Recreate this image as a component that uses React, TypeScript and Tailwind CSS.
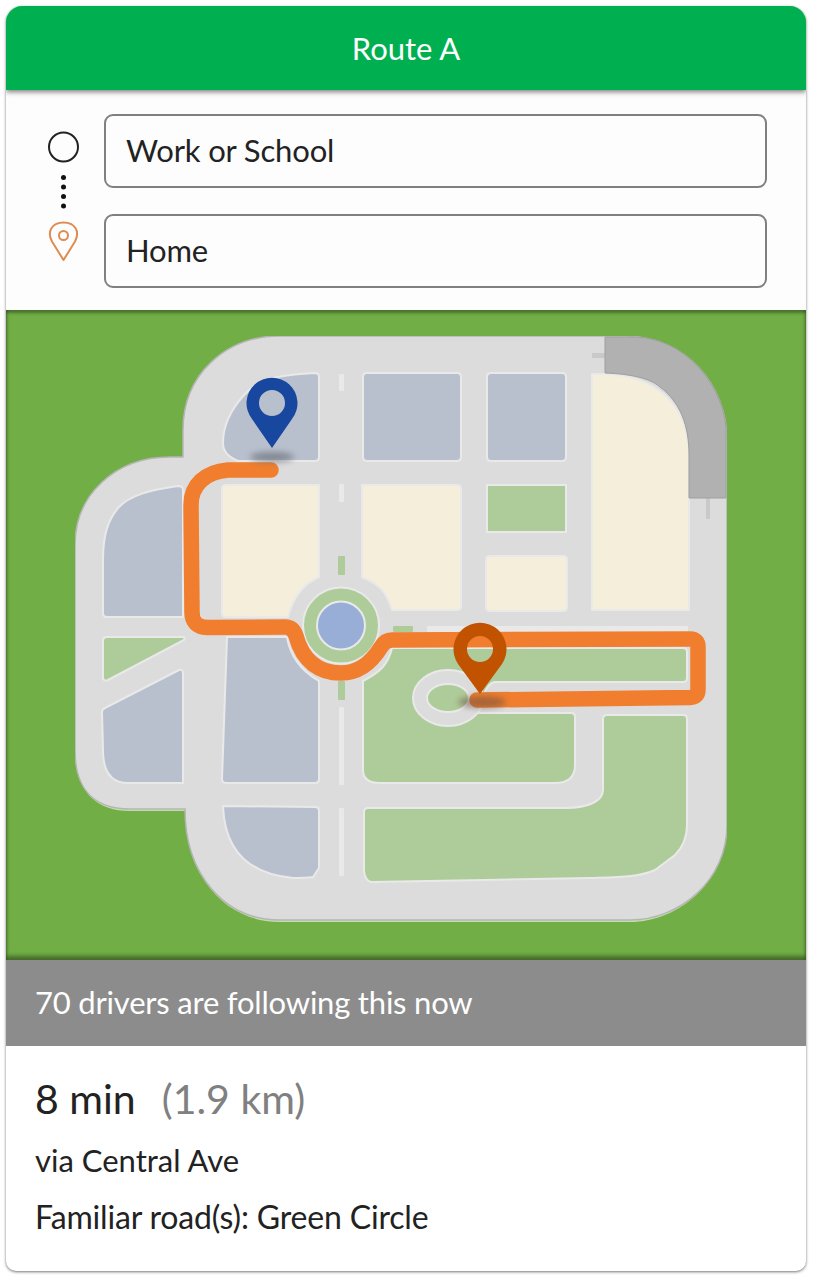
const BLUE = "#b8c0ce"
const CREAM = "#f4eedb"
const GREEN = "#aecc99"
const EDGE = "#e9e9ea"

const blocks: { d: string; fill: string }[] = [
  { fill: BLUE, d: "M223 443C223 425 232 408 245 394C258 380 275 376 300 374L315 373Q319 373 319 377V457Q319 461 315 461H238Q223 455 223 443Z" },
  { fill: BLUE, d: "M367 373H457Q461 373 461 377V457Q461 461 457 461H367Q363 461 363 457V377Q363 373 367 373Z" },
  { fill: BLUE, d: "M491 373H562Q566 373 566 377V457Q566 461 562 461H491Q487 461 487 457V377Q487 373 491 373Z" },
  { fill: CREAM, d: "M592 374H605C650 375 689 400 689 455V610H592Z" },
  { fill: CREAM, d: "M226 485H319V577Q295 588 288 617H226Q222 617 222 613V489Q222 485 226 485Z" },
  { fill: CREAM, d: "M362 485H457Q461 485 461 489V606Q461 610 457 610H392C386 590 378 584 362 577Z" },
  { fill: GREEN, d: "M487 485H566V532H487Z" },
  { fill: CREAM, d: "M490 556H563Q567 556 567 560V607Q567 611 563 611H490Q486 611 486 607V560Q486 556 490 556Z" },
  { fill: BLUE, d: "M103 560C103 535 108 520 118 508C130 495 150 490 178 486Q183 486 183 490V617H107Q103 617 103 613Z" },
  { fill: GREEN, d: "M107 637H182Q186 637 184 640L108 680Q103 682 103 677V641Q103 637 107 637Z" },
  { fill: BLUE, d: "M102 712Q102 709 105 708L179 670Q183 669 183 673V783H128C110 783 103 770 103 750Z" },
  { fill: BLUE, d: "M227 637H287C290 655 300 670 319 681V779Q319 783 315 783H226Q222 783 222 779Z" },
  { fill: BLUE, d: "M223 806L315 807Q319 807 319 811V868L313 877Q305 878 293 878C260 875 225 860 223 806Z" },
  {
    fill: GREEN,
    d: "M392 648H683Q687 648 687 652V678Q687 682 683 682H495C490 682 483 690 478 713H571Q575 713 575 717V765C575 780 565 783 555 783H380C368 783 363 778 363 770V681C380 672 388 665 392 648Z",
  },
  {
    fill: GREEN,
    d: "M368 808H565C590 808 603 800 603 790V719Q603 715 607 715H683Q687 715 687 719V825C687 840 680 850 675 855L655 870C640 877 620 877 590 878L372 882C366 882 364 874 364 870V812Q364 808 368 808Z",
  },
]

const dashes: { x: number; y: number; w: number; h: number; fill: string }[] = [
  { x: 339, y: 374, w: 5, h: 17, fill: EDGE },
  { x: 339, y: 484, w: 5, h: 18, fill: EDGE },
  { x: 338, y: 556, w: 7, h: 19, fill: GREEN },
  { x: 338, y: 681, w: 7, h: 19, fill: GREEN },
  { x: 339, y: 707, w: 5, h: 78, fill: EDGE },
  { x: 339, y: 808, w: 5, h: 68, fill: EDGE },
  { x: 393, y: 626, w: 20, h: 6, fill: GREEN },
  { x: 427, y: 626, w: 261, h: 6, fill: EDGE },
  { x: 592, y: 353, w: 13, h: 5, fill: "#c9c9c9" },
  { x: 706, y: 498, w: 4, h: 21, fill: "#c9c9c9" },
]

function CityMap() {
  return (
    <svg viewBox="6 310 800 650" className="block w-full h-full">
      <defs>
        <filter id="pinShadow" x="-50%" y="-100%" width="200%" height="300%">
          <feGaussianBlur stdDeviation="3" />
        </filter>
        <filter id="soft" x="0" y="0" width="100%" height="100%">
          <feGaussianBlur stdDeviation="0.6" />
        </filter>
      </defs>

      <g filter="url(#soft)">
        {/* land */}
        <path
          d="M75 545C75 495 115 457 170 457H183V430C183 375 225 336 280 336H625C685 336 727 385 727 440V825C727 880 680 922 630 922H280C225 922 185 875 185 811H130C95 811 75 790 75 750Z"
          fill="#c4dcb0"
        />
        <path
          d="M75 545C75 495 115 457 170 457H183V430C183 375 225 336 280 336H625C685 336 727 385 727 440V825C727 880 680 920 630 920H280C225 920 185 875 185 809H130C95 809 75 790 75 750Z"
          fill="#dddcdd"
          stroke="#b5b5b5"
          strokeWidth="1.500"
        />

        {/* roundabouts */}
        <circle cx="341" cy="625" r="55" fill="#dddcdd" />
        <path d="M483 682H687V713H483Z" fill="#dddcdd" />

        {blocks.map((b, i) => (
          <path key={i} d={b.d} fill={b.fill} stroke={EDGE} strokeWidth="2" />
        ))}

        <ellipse cx="448" cy="698" rx="35" ry="28" fill="#dddcdd" stroke={EDGE} strokeWidth="2" />
        <ellipse cx="448" cy="698" rx="21" ry="14" fill={GREEN} stroke={EDGE} strokeWidth="2" />
        <circle cx="341" cy="625.5" r="38" fill={GREEN} stroke={EDGE} strokeWidth="2" />
        <circle cx="341" cy="625.5" r="24" fill="#99aed6" stroke={EDGE} strokeWidth="2" />

        {dashes.map((d, i) => (
          <rect key={i} x={d.x} y={d.y} width={d.w} height={d.h} rx="1" fill={d.fill} />
        ))}

        {/* closed road corner */}
        <path
          d="M605 337V373C630 374 650 378 660 387C680 402 689 425 689 455V498H726V427C722 385 685 337 633 337Z"
          fill="#b1b1b1"
          stroke="#9f9f9f"
        />
      </g>

      {/* route */}
      <path
        d="M271 470H228C205 472 191 485 191 505L192 612Q192 627 207 627.5L285 627Q293 627 296 636C303 662 320 673 341 673C360 673 373 660 381 647Q385 640 392 640L690 639Q698 639 698 647V690Q698 697 690 697.5L477 700"
        fill="none"
        stroke="#f07e2e"
        strokeWidth="15.500"
        strokeLinecap="round"
        strokeLinejoin="round"
      />

      <ellipse cx="272" cy="457" rx="22" ry="5" fill="#6b7078" opacity="0.7" filter="url(#pinShadow)" />
      <ellipse cx="482" cy="702" rx="24" ry="6" fill="#6b5040" opacity="0.55" filter="url(#pinShadow)" />

      {/* pins */}
      <path
        fillRule="evenodd"
        fill="#17479e"
        d="M272 448L252 419A25.5 25.5 0 1 1 292 419ZM272 390A13 13 0 1 0 272 416A13 13 0 1 0 272 390Z"
      />
      <path
        fillRule="evenodd"
        fill="#c15300"
        d="M480 694L458 664A26.5 26.5 0 1 1 502 664ZM480 636A13 13 0 1 0 480 662A13 13 0 1 0 480 636Z"
      />
    </svg>
  )
}

function TripIcons() {
  return (
    <svg width="36" height="140" viewBox="0 0 36 140" className="block">
      <circle cx="18.500" cy="17" r="14.500" fill="none" stroke="#222222" strokeWidth="2" />
      <circle cx="18.500" cy="47.500" r="2.500" fill="#111111" />
      <circle cx="18.500" cy="57" r="2.500" fill="#111111" />
      <circle cx="18.500" cy="66.500" r="2.500" fill="#111111" />
      <circle cx="18.500" cy="76" r="2.500" fill="#111111" />
      <path
        d="M18.500 130L7 111.500C1.500 101 7.500 92.500 18.500 92.500C29.500 92.500 35.500 101 30 111.500Z"
        fill="none"
        stroke="#dd8c53"
        strokeWidth="2"
        strokeLinejoin="round"
      />
      <circle cx="18.500" cy="105.500" r="4.500" fill="none" stroke="#dd8c53" strokeWidth="2" />
    </svg>
  )
}

export default function App() {
  return (
    <div className="min-h-[1280px] bg-white pt-[6px] pl-[6px] font-['Lato','Open_Sans',sans-serif]">
      <div className="w-[800px] h-[1265px] flex flex-col rounded-t-[16px] rounded-b-[10px] overflow-hidden bg-white shadow-[0_1px_3px_rgba(0,0,0,0.55)]">
        <div className="h-[84px] shrink-0 flex items-center justify-center bg-[#00b050] text-white text-[31px] shadow-[0_2px_5px_rgba(0,0,0,0.5)] z-10">
          Route A
        </div>

        <div className="h-[220px] shrink-0 flex items-center bg-[#fdfdfd] pl-[39px] pr-[39px] gap-[23px]">
          <TripIcons />
          <div className="flex-1 flex flex-col gap-[26px] mt-[2px]">
            <div className="h-[74px] flex items-center rounded-[9px] border-2 border-[#808080] px-[20px] pb-[2px] text-[31px] tracking-[-0.15px] text-[#222222]">
              Work or School
            </div>
            <div className="h-[74px] flex items-center rounded-[9px] border-2 border-[#808080] px-[20px] pb-[2px] text-[31px] tracking-[-0.15px] text-[#222222]">
              Home
            </div>
          </div>
        </div>

        <div className="h-[650px] shrink-0 bg-[#71ae45] shadow-[inset_0_3px_3px_rgba(0,0,0,0.35),inset_0_-4px_4px_rgba(0,0,0,0.4)]">
          <CityMap />
        </div>

        <div className="h-[86px] shrink-0 flex items-center bg-[#8c8c8c] px-[29px] pb-[2px] text-[31px] tracking-[-0.2px] text-white">
          70 drivers are following this now
        </div>

        <div className="flex-1 px-[29px] text-[#222222]">
          <div className="mt-[25px] h-[56px] flex items-center text-[41px]">
            8 min
            <span className="ml-[26px] text-[#808080]">(1.9 km)</span>
          </div>
          <div className="mt-[11px] text-[31px] leading-[44px]">via Central Ave</div>
          <div className="mt-[13px] text-[32px] tracking-[-0.17px] leading-[44px]">Familiar road(s): Green Circle</div>
        </div>
      </div>
    </div>
  )
}
